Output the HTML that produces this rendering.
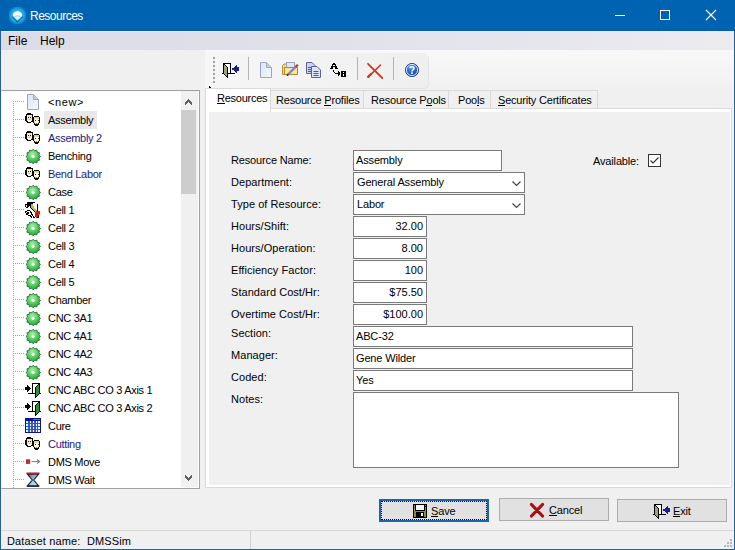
<!DOCTYPE html>
<html><head><meta charset="utf-8">
<style>
*{margin:0;padding:0;box-sizing:border-box}
html,body{width:735px;height:550px;overflow:hidden;background:#f0f0f0;font-family:"Liberation Sans",sans-serif;font-size:11px;color:#000}
.a{position:absolute}
.t{position:absolute;white-space:pre;line-height:13px;letter-spacing:-0.15px}
#title{left:0;top:0;width:735px;height:31px;background:#0063b1}
#menubar{left:1px;top:31px;width:733px;height:19px;background:linear-gradient(90deg,#dcdce7,#e1e1ea 45%,#ebebf0);border-top:1px solid #e2f0fa}
.menu{position:absolute;top:2px;font-size:12px;line-height:15px;white-space:pre}
#tree{left:1px;top:90px;width:199px;height:399px;background:#fff;border:1px solid #a0a0a0;border-left-color:#f4f8fb;overflow:hidden}
.row{position:absolute;left:0;width:178px;height:18px;white-space:nowrap}
.selbox{position:absolute;left:42px;top:0;width:53px;height:18px;background:#e9e9e9}
.lbl{position:absolute;left:46px;top:3px;line-height:13px;letter-spacing:-0.3px}
.blue{color:#1a1a84}
.dh{position:absolute;left:13px;top:8px;width:10px;height:1px;background:repeating-linear-gradient(90deg,#a0a0a0 0 1px,transparent 1px 2px)}
.ico{position:absolute;left:23px;top:1px;width:16px;height:16px}
#vline{left:11px;top:10px;width:1px;height:400px;background:repeating-linear-gradient(#a0a0a0 0 1px,transparent 1px 2px)}
#sb{left:179px;top:0px;width:17px;height:396px;background:#f0f0f0}
#thumb{left:0px;top:19px;width:15px;height:84px;background:#cdcdcd}
.field{position:absolute;background:#fff;border:1px solid #7a7a7a;height:21px;line-height:19px;padding-left:2px;white-space:nowrap;letter-spacing:-0.15px;overflow:hidden}
.combo{padding-left:3px}
.num{text-align:right;padding-right:3px;letter-spacing:0}
.tab{position:absolute;top:90px;height:18px;background:#f0f0f0;border:1px solid #d9d9d9;border-bottom:none}
.btn{position:absolute;width:110px;height:23px;background:#e1e1e1;border:1px solid #adadad}
u{text-decoration:none;position:relative}
u:after{content:"";position:absolute;left:0;right:0;bottom:0px;height:1px;background:#000}
</style></head><body>
<div id="title" class="a">
  <svg class="a" style="left:9px;top:7px" width="17" height="17" viewBox="0 0 17 17">
    <defs><radialGradient id="g1" cx="0.5" cy="0.5" r="0.6"><stop offset="0" stop-color="#b8f4ff"/><stop offset="0.45" stop-color="#2cbcf0"/><stop offset="0.8" stop-color="#128ad4"/><stop offset="1" stop-color="#0063b1" stop-opacity="0"/></radialGradient>
    <linearGradient id="g2" x1="0" y1="0" x2="0" y2="1"><stop offset="0" stop-color="#ffffff"/><stop offset="0.6" stop-color="#f0fcff"/><stop offset="1" stop-color="#a8e4ff"/></linearGradient></defs>
    <rect x="0" y="0" width="17" height="17" rx="4" fill="url(#g1)"/>
    <path d="M3.4 9.6 L8.5 15 L13.6 9.6" stroke="#0a3878" stroke-width="1.2" fill="none" opacity="0.6"/>
    <path d="M3.8 8.8 C3.8 2.6 13.2 2.6 13.2 8.8 L8.5 13.6 Z" fill="url(#g2)"/>
    <path d="M5.5 9.8 C7 8.6 10 8.6 11.5 9.8" stroke="#6cc8f0" stroke-width="0.9" fill="none"/>
  </svg>
  <div class="a" style="left:30px;top:8px;font-size:12px;color:#fff;letter-spacing:-0.5px;line-height:17px;white-space:pre">Resources</div>
  <div class="a" style="left:615px;top:15px;width:10px;height:1px;background:#fff"></div>
  <div class="a" style="left:660px;top:10px;width:10px;height:10px;border:1px solid #fff"></div>
  <svg class="a" style="left:705px;top:9px" width="12" height="12" viewBox="0 0 12 12"><path d="M1 1 L11 11 M11 1 L1 11" stroke="#fff" stroke-width="1.1"/></svg>
</div>
<div class="a" style="left:0;top:30px;width:735px;height:1px;background:#0a5aa6"></div>
<div id="menubar" class="a">
  <div class="menu" style="left:7px">File</div>
  <div class="menu" style="left:39px">Help</div>
</div>
<div class="a" style="left:0;top:31px;width:1px;height:519px;background:#24609c"></div>
<div class="a" style="left:734px;top:31px;width:1px;height:519px;background:#24609c"></div>
<div class="a" style="left:0;top:549px;width:735px;height:1px;background:#24609c"></div>
<div class="a" style="left:1px;top:50px;width:1px;height:499px;background:#e8f6fc"></div>
<div class="a" style="left:733px;top:50px;width:1px;height:499px;background:#eef6fa"></div>
<div class="a" style="left:1px;top:548px;width:733px;height:1px;background:#e8f6fc"></div>

<!-- toolbar -->
<div class="a" style="left:205px;top:50px;width:529px;height:39px;background:linear-gradient(#f8f8f8,#f4f4f4 60%,#f1f1f1)"></div>
<div class="a" style="left:205px;top:53px;width:223px;height:35px;background:linear-gradient(90deg,#f6f6f6,#efefef);border-radius:0 5px 5px 0;box-shadow:1px 1px 0 #e4e4e4"></div>
<div class="a" style="left:213px;top:57px;width:2px;height:26px;background:repeating-linear-gradient(#a0a0a0 0 2px,transparent 2px 4px)"></div>
<svg class="a" style="left:209px;top:86px" width="2" height="2" viewBox="0 0 2 2" shape-rendering="crispEdges"><rect x="0" y="0" width="1" height="2" fill="#000"/><rect x="1" y="1" width="1" height="1" fill="#000"/></svg>

<svg class="a" style="left:222px;top:62px" width="17" height="16" viewBox="0 0 17 16" shape-rendering="crispEdges"><rect x="1" y="1" width="8" height="1" fill="#000"/><rect x="1" y="2" width="2" height="1" fill="#000"/><rect x="3" y="2" width="5" height="1" fill="#fff"/><rect x="8" y="2" width="1" height="1" fill="#000"/><rect x="1" y="3" width="1" height="1" fill="#000"/><rect x="2" y="3" width="1" height="1" fill="#a4a070"/><rect x="3" y="3" width="1" height="1" fill="#000"/><rect x="4" y="3" width="4" height="1" fill="#fff"/><rect x="8" y="3" width="1" height="1" fill="#000"/><rect x="14" y="3" width="1" height="1" fill="#1c1c8a"/><rect x="1" y="4" width="1" height="1" fill="#000"/><rect x="2" y="4" width="2" height="1" fill="#a4a070"/><rect x="4" y="4" width="1" height="1" fill="#000"/><rect x="5" y="4" width="3" height="1" fill="#fff"/><rect x="8" y="4" width="1" height="1" fill="#000"/><rect x="13" y="4" width="2" height="1" fill="#1c1c8a"/><rect x="1" y="5" width="1" height="1" fill="#000"/><rect x="2" y="5" width="3" height="1" fill="#a4a070"/><rect x="5" y="5" width="1" height="1" fill="#000"/><rect x="6" y="5" width="2" height="1" fill="#fff"/><rect x="8" y="5" width="1" height="1" fill="#000"/><rect x="12" y="5" width="5" height="1" fill="#1c1c8a"/><rect x="1" y="6" width="1" height="1" fill="#000"/><rect x="2" y="6" width="3" height="1" fill="#a4a070"/><rect x="5" y="6" width="1" height="1" fill="#000"/><rect x="6" y="6" width="2" height="1" fill="#fff"/><rect x="8" y="6" width="1" height="1" fill="#000"/><rect x="10" y="6" width="7" height="1" fill="#1c1c8a"/><rect x="1" y="7" width="1" height="1" fill="#000"/><rect x="2" y="7" width="3" height="1" fill="#a4a070"/><rect x="5" y="7" width="1" height="1" fill="#000"/><rect x="6" y="7" width="2" height="1" fill="#fff"/><rect x="8" y="7" width="1" height="1" fill="#000"/><rect x="10" y="7" width="7" height="1" fill="#1c1c8a"/><rect x="1" y="8" width="1" height="1" fill="#000"/><rect x="2" y="8" width="3" height="1" fill="#a4a070"/><rect x="5" y="8" width="1" height="1" fill="#000"/><rect x="6" y="8" width="2" height="1" fill="#fff"/><rect x="8" y="8" width="1" height="1" fill="#000"/><rect x="12" y="8" width="5" height="1" fill="#1c1c8a"/><rect x="1" y="9" width="1" height="1" fill="#000"/><rect x="2" y="9" width="3" height="1" fill="#a4a070"/><rect x="5" y="9" width="1" height="1" fill="#000"/><rect x="6" y="9" width="2" height="1" fill="#fff"/><rect x="8" y="9" width="1" height="1" fill="#000"/><rect x="13" y="9" width="2" height="1" fill="#1c1c8a"/><rect x="1" y="10" width="1" height="1" fill="#000"/><rect x="2" y="10" width="3" height="1" fill="#a4a070"/><rect x="5" y="10" width="1" height="1" fill="#000"/><rect x="6" y="10" width="2" height="1" fill="#fff"/><rect x="8" y="10" width="1" height="1" fill="#000"/><rect x="14" y="10" width="1" height="1" fill="#1c1c8a"/><rect x="0" y="11" width="2" height="1" fill="#000"/><rect x="2" y="11" width="3" height="1" fill="#a4a070"/><rect x="5" y="11" width="8" height="1" fill="#000"/><rect x="2" y="12" width="1" height="1" fill="#000"/><rect x="3" y="12" width="2" height="1" fill="#a4a070"/><rect x="5" y="12" width="1" height="1" fill="#000"/><rect x="3" y="13" width="1" height="1" fill="#000"/><rect x="4" y="13" width="1" height="1" fill="#a4a070"/><rect x="5" y="13" width="1" height="1" fill="#000"/><rect x="4" y="14" width="2" height="1" fill="#000"/><rect x="5" y="15" width="1" height="1" fill="#000"/></svg>
<div class="a" style="left:248px;top:57px;width:1px;height:23px;background:#b4b4b4"></div>
<svg class="a" style="left:258px;top:61px" width="16" height="18" viewBox="0 0 16 18"><defs><linearGradient id="gd2" x1="0" y1="0" x2="1" y2="1"><stop offset="0" stop-color="#d6e6fb"/><stop offset="1" stop-color="#f4f8fe"/></linearGradient></defs><path d="M2.5 1.5 H8.5 L13.5 6.5 V16.5 H2.5 Z" fill="url(#gd2)" stroke="#9aa6bf"/><path d="M8.5 1.5 V6.5 H13.5" fill="#c8d0de" stroke="#9aa6bf"/></svg>
<svg class="a" style="left:281px;top:61px" width="18" height="17" viewBox="0 0 18 17"><path d="M1.5 13.5 V4.5 L3 3 H6 V13.5 Z" fill="#f4dc88" stroke="#b8902a"/><rect x="5.5" y="1.5" width="8" height="6" fill="#dde9f6" stroke="#98a4b4"/><path d="M3.5 6.5 H16.5 V13.5 H3.5 Z" fill="#f8e6a0" stroke="#b08628"/><path d="M7.2 13.2 L15 5.6" stroke="#8484c8" stroke-width="2.3"/><path d="M14.6 6 L16.8 3.8" stroke="#c83420" stroke-width="2.3"/><path d="M6 14.6 L7.4 13.2" stroke="#3a3020" stroke-width="1.8"/></svg>
<svg class="a" style="left:305px;top:61px" width="17" height="18" viewBox="0 0 17 18"><path d="M1.5 1.5 H7 L10 4.5 V12.5 H1.5 Z" fill="#c8d4f4" stroke="#5a6090"/><path d="M3 6.5h4M3 8.5h4M3 10.5h4" stroke="#505888"/><path d="M6.5 5.5 H12 L15.5 9 V16.5 H6.5 Z" fill="#dce4f8" stroke="#5a6090"/><path d="M8.5 10.5h5M8.5 12.5h5M8.5 14.5h5" stroke="#505888"/></svg>
<svg class="a" style="left:329px;top:62px" width="18" height="16" viewBox="0 0 18 16" shape-rendering="crispEdges"><rect x="4" y="1" width="2" height="1" fill="#000"/><rect x="3" y="2" width="4" height="1" fill="#000"/><rect x="3" y="3" width="1" height="1" fill="#000"/><rect x="6" y="3" width="1" height="1" fill="#000"/><rect x="2" y="4" width="6" height="1" fill="#000"/><rect x="2" y="5" width="2" height="1" fill="#000"/><rect x="6" y="5" width="2" height="1" fill="#000"/><rect x="1" y="6" width="3" height="1" fill="#000"/><rect x="6" y="6" width="3" height="1" fill="#000"/><rect x="4" y="8" width="1" height="1" fill="#000"/><rect x="4" y="9" width="1" height="1" fill="#000"/><rect x="9" y="9" width="1" height="1" fill="#000"/><rect x="12" y="9" width="5" height="1" fill="#000"/><rect x="5" y="10" width="1" height="1" fill="#000"/><rect x="9" y="10" width="2" height="1" fill="#000"/><rect x="12" y="10" width="2" height="1" fill="#000"/><rect x="14" y="10" width="1" height="1" fill="#fff"/><rect x="15" y="10" width="2" height="1" fill="#000"/><rect x="6" y="11" width="5" height="1" fill="#000"/><rect x="12" y="11" width="5" height="1" fill="#000"/><rect x="9" y="12" width="2" height="1" fill="#000"/><rect x="12" y="12" width="2" height="1" fill="#000"/><rect x="14" y="12" width="1" height="1" fill="#fff"/><rect x="15" y="12" width="2" height="1" fill="#000"/><rect x="9" y="13" width="1" height="1" fill="#000"/><rect x="12" y="13" width="2" height="1" fill="#000"/><rect x="14" y="13" width="1" height="1" fill="#fff"/><rect x="15" y="13" width="2" height="1" fill="#000"/><rect x="12" y="14" width="5" height="1" fill="#000"/></svg>
<div class="a" style="left:357px;top:57px;width:1px;height:23px;background:#b4b4b4"></div>
<svg class="a" style="left:366px;top:62px" width="18" height="17" viewBox="0 0 18 17"><path d="M2 1.8 L16.3 16" stroke="#d03a1c" stroke-width="1.8" stroke-linecap="round"/><path d="M14.5 3 L2.6 14.6" stroke="#d03a1c" stroke-width="1.6" stroke-linecap="round"/><path d="M2.2 14.8 L5 12" stroke="#d03a1c" stroke-width="2.4" stroke-linecap="round"/></svg>
<div class="a" style="left:393px;top:57px;width:1px;height:23px;background:#b4b4b4"></div>
<svg class="a" style="left:404px;top:62px" width="16" height="16" viewBox="0 0 16 16"><defs><radialGradient id="gh" cx="0.4" cy="0.3" r="0.75"><stop offset="0" stop-color="#4a90f0"/><stop offset="1" stop-color="#0a3aa0"/></radialGradient></defs><circle cx="8" cy="8" r="6.6" fill="url(#gh)" stroke="#28407a" stroke-width="0.9"/><circle cx="8" cy="8" r="5.6" fill="none" stroke="#f0f6ff" stroke-width="0.9"/><path d="M6 6.2 C6 4.2 10 4.2 10 6.2 C10 7.6 8 7.6 8 9.4" stroke="#fff" stroke-width="1.6" fill="none"/><rect x="7.2" y="10.3" width="1.7" height="1.7" fill="#fff"/></svg>


<!-- tree -->
<div id="tree" class="a">
  <div id="vline" class="a"></div>
<div class="row" style="top:2px"><div class="dh"></div><svg class="ico" width="16" height="16" viewBox="0 0 16 16"><defs><linearGradient id="gd" x1="0" y1="0" x2="1" y2="1"><stop offset="0" stop-color="#d6e6fb"/><stop offset="1" stop-color="#f4f8fe"/></linearGradient></defs><path d="M2.5 0.5 H8.5 L13.5 5.5 V15.5 H2.5 Z" fill="url(#gd)" stroke="#9aa6bf"/><path d="M8.5 0.5 V5.5 H13.5" fill="#c8d0de" stroke="#9aa6bf"/></svg><div class="lbl"><span style="letter-spacing:0.6px">&lt;new&gt;</span></div></div>
<div class="row" style="top:20px"><div class="selbox"></div><div class="dh"></div><svg class="ico" width="16" height="16" viewBox="0 0 16 16" shape-rendering="crispEdges"><rect x="2" y="1" width="4" height="1" fill="#0a0806"/><rect x="1" y="2" width="7" height="1" fill="#0a0806"/><rect x="1" y="3" width="1" height="1" fill="#0a0806"/><rect x="2" y="3" width="5" height="1" fill="#f0e8cc"/><rect x="7" y="3" width="1" height="1" fill="#0a0806"/><rect x="0" y="4" width="2" height="1" fill="#0a0806"/><rect x="2" y="4" width="5" height="1" fill="#f0e8cc"/><rect x="7" y="4" width="1" height="1" fill="#0a0806"/><rect x="9" y="4" width="5" height="1" fill="#0a0806"/><rect x="0" y="5" width="2" height="1" fill="#0a0806"/><rect x="2" y="5" width="1" height="1" fill="#f0e8cc"/><rect x="3" y="5" width="1" height="1" fill="#302818"/><rect x="4" y="5" width="1" height="1" fill="#f0e8cc"/><rect x="5" y="5" width="1" height="1" fill="#302818"/><rect x="6" y="5" width="1" height="1" fill="#f0e8cc"/><rect x="7" y="5" width="2" height="1" fill="#0a0806"/><rect x="9" y="5" width="5" height="1" fill="#dcd89a"/><rect x="14" y="5" width="1" height="1" fill="#0a0806"/><rect x="0" y="6" width="2" height="1" fill="#0a0806"/><rect x="2" y="6" width="5" height="1" fill="#f0e8cc"/><rect x="7" y="6" width="2" height="1" fill="#0a0806"/><rect x="9" y="6" width="5" height="1" fill="#dcd89a"/><rect x="14" y="6" width="1" height="1" fill="#0a0806"/><rect x="0" y="7" width="2" height="1" fill="#0a0806"/><rect x="2" y="7" width="2" height="1" fill="#f0e8cc"/><rect x="4" y="7" width="1" height="1" fill="#b0a878"/><rect x="5" y="7" width="2" height="1" fill="#f0e8cc"/><rect x="7" y="7" width="2" height="1" fill="#0a0806"/><rect x="9" y="7" width="5" height="1" fill="#fbf9ee"/><rect x="14" y="7" width="1" height="1" fill="#0a0806"/><rect x="0" y="8" width="2" height="1" fill="#0a0806"/><rect x="2" y="8" width="1" height="1" fill="#f0e8cc"/><rect x="3" y="8" width="3" height="1" fill="#fbf9ee"/><rect x="6" y="8" width="1" height="1" fill="#f0e8cc"/><rect x="7" y="8" width="2" height="1" fill="#0a0806"/><rect x="9" y="8" width="1" height="1" fill="#fbf9ee"/><rect x="10" y="8" width="1" height="1" fill="#302818"/><rect x="11" y="8" width="2" height="1" fill="#fbf9ee"/><rect x="13" y="8" width="1" height="1" fill="#302818"/><rect x="14" y="8" width="1" height="1" fill="#0a0806"/><rect x="1" y="9" width="2" height="1" fill="#0a0806"/><rect x="3" y="9" width="3" height="1" fill="#fbf9ee"/><rect x="6" y="9" width="3" height="1" fill="#0a0806"/><rect x="9" y="9" width="5" height="1" fill="#fbf9ee"/><rect x="14" y="9" width="1" height="1" fill="#0a0806"/><rect x="2" y="10" width="4" height="1" fill="#0a0806"/><rect x="8" y="10" width="1" height="1" fill="#0a0806"/><rect x="9" y="10" width="1" height="1" fill="#dcd89a"/><rect x="10" y="10" width="3" height="1" fill="#fbf9ee"/><rect x="13" y="10" width="1" height="1" fill="#dcd89a"/><rect x="14" y="10" width="1" height="1" fill="#0a0806"/><rect x="9" y="11" width="1" height="1" fill="#0a0806"/><rect x="10" y="11" width="1" height="1" fill="#dcd89a"/><rect x="11" y="11" width="1" height="1" fill="#b0a878"/><rect x="12" y="11" width="1" height="1" fill="#dcd89a"/><rect x="13" y="11" width="1" height="1" fill="#0a0806"/><rect x="9" y="12" width="5" height="1" fill="#0a0806"/><rect x="10" y="13" width="3" height="1" fill="#0a0806"/></svg><div class="lbl">Assembly</div></div>
<div class="row" style="top:38px"><div class="dh"></div><svg class="ico" width="16" height="16" viewBox="0 0 16 16" shape-rendering="crispEdges"><rect x="2" y="1" width="4" height="1" fill="#0a0806"/><rect x="1" y="2" width="7" height="1" fill="#0a0806"/><rect x="1" y="3" width="1" height="1" fill="#0a0806"/><rect x="2" y="3" width="5" height="1" fill="#f0e8cc"/><rect x="7" y="3" width="1" height="1" fill="#0a0806"/><rect x="0" y="4" width="2" height="1" fill="#0a0806"/><rect x="2" y="4" width="5" height="1" fill="#f0e8cc"/><rect x="7" y="4" width="1" height="1" fill="#0a0806"/><rect x="9" y="4" width="5" height="1" fill="#0a0806"/><rect x="0" y="5" width="2" height="1" fill="#0a0806"/><rect x="2" y="5" width="1" height="1" fill="#f0e8cc"/><rect x="3" y="5" width="1" height="1" fill="#302818"/><rect x="4" y="5" width="1" height="1" fill="#f0e8cc"/><rect x="5" y="5" width="1" height="1" fill="#302818"/><rect x="6" y="5" width="1" height="1" fill="#f0e8cc"/><rect x="7" y="5" width="2" height="1" fill="#0a0806"/><rect x="9" y="5" width="5" height="1" fill="#dcd89a"/><rect x="14" y="5" width="1" height="1" fill="#0a0806"/><rect x="0" y="6" width="2" height="1" fill="#0a0806"/><rect x="2" y="6" width="5" height="1" fill="#f0e8cc"/><rect x="7" y="6" width="2" height="1" fill="#0a0806"/><rect x="9" y="6" width="5" height="1" fill="#dcd89a"/><rect x="14" y="6" width="1" height="1" fill="#0a0806"/><rect x="0" y="7" width="2" height="1" fill="#0a0806"/><rect x="2" y="7" width="2" height="1" fill="#f0e8cc"/><rect x="4" y="7" width="1" height="1" fill="#b0a878"/><rect x="5" y="7" width="2" height="1" fill="#f0e8cc"/><rect x="7" y="7" width="2" height="1" fill="#0a0806"/><rect x="9" y="7" width="5" height="1" fill="#fbf9ee"/><rect x="14" y="7" width="1" height="1" fill="#0a0806"/><rect x="0" y="8" width="2" height="1" fill="#0a0806"/><rect x="2" y="8" width="1" height="1" fill="#f0e8cc"/><rect x="3" y="8" width="3" height="1" fill="#fbf9ee"/><rect x="6" y="8" width="1" height="1" fill="#f0e8cc"/><rect x="7" y="8" width="2" height="1" fill="#0a0806"/><rect x="9" y="8" width="1" height="1" fill="#fbf9ee"/><rect x="10" y="8" width="1" height="1" fill="#302818"/><rect x="11" y="8" width="2" height="1" fill="#fbf9ee"/><rect x="13" y="8" width="1" height="1" fill="#302818"/><rect x="14" y="8" width="1" height="1" fill="#0a0806"/><rect x="1" y="9" width="2" height="1" fill="#0a0806"/><rect x="3" y="9" width="3" height="1" fill="#fbf9ee"/><rect x="6" y="9" width="3" height="1" fill="#0a0806"/><rect x="9" y="9" width="5" height="1" fill="#fbf9ee"/><rect x="14" y="9" width="1" height="1" fill="#0a0806"/><rect x="2" y="10" width="4" height="1" fill="#0a0806"/><rect x="8" y="10" width="1" height="1" fill="#0a0806"/><rect x="9" y="10" width="1" height="1" fill="#dcd89a"/><rect x="10" y="10" width="3" height="1" fill="#fbf9ee"/><rect x="13" y="10" width="1" height="1" fill="#dcd89a"/><rect x="14" y="10" width="1" height="1" fill="#0a0806"/><rect x="9" y="11" width="1" height="1" fill="#0a0806"/><rect x="10" y="11" width="1" height="1" fill="#dcd89a"/><rect x="11" y="11" width="1" height="1" fill="#b0a878"/><rect x="12" y="11" width="1" height="1" fill="#dcd89a"/><rect x="13" y="11" width="1" height="1" fill="#0a0806"/><rect x="9" y="12" width="5" height="1" fill="#0a0806"/><rect x="10" y="13" width="3" height="1" fill="#0a0806"/></svg><div class="lbl blue">Assembly 2</div></div>
<div class="row" style="top:56px"><div class="dh"></div><svg class="ico" width="16" height="16" viewBox="0 0 16 16"><defs><radialGradient id="gg" cx="0.45" cy="0.35" r="0.7"><stop offset="0" stop-color="#a8f0a8"/><stop offset="0.55" stop-color="#50c85a"/><stop offset="1" stop-color="#1e9a30"/></radialGradient></defs><path d="M8.20 1.20 L9.73 2.80 L11.85 2.18 L12.37 4.33 L14.52 4.85 L13.90 6.97 L15.50 8.50 L13.90 10.03 L14.52 12.15 L12.37 12.67 L11.85 14.82 L9.73 14.20 L8.20 15.80 L6.67 14.20 L4.55 14.82 L4.03 12.67 L1.88 12.15 L2.50 10.03 L0.90 8.50 L2.50 6.97 L1.88 4.85 L4.03 4.33 L4.55 2.18 L6.67 2.80 Z" fill="url(#gg)" stroke="#16662a" stroke-width="0.8"/><circle cx="8" cy="8.3" r="1.6" fill="#fff"/></svg><div class="lbl">Benching</div></div>
<div class="row" style="top:74px"><div class="dh"></div><svg class="ico" width="16" height="16" viewBox="0 0 16 16" shape-rendering="crispEdges"><rect x="2" y="1" width="4" height="1" fill="#0a0806"/><rect x="1" y="2" width="7" height="1" fill="#0a0806"/><rect x="1" y="3" width="1" height="1" fill="#0a0806"/><rect x="2" y="3" width="5" height="1" fill="#f0e8cc"/><rect x="7" y="3" width="1" height="1" fill="#0a0806"/><rect x="0" y="4" width="2" height="1" fill="#0a0806"/><rect x="2" y="4" width="5" height="1" fill="#f0e8cc"/><rect x="7" y="4" width="1" height="1" fill="#0a0806"/><rect x="9" y="4" width="5" height="1" fill="#0a0806"/><rect x="0" y="5" width="2" height="1" fill="#0a0806"/><rect x="2" y="5" width="1" height="1" fill="#f0e8cc"/><rect x="3" y="5" width="1" height="1" fill="#302818"/><rect x="4" y="5" width="1" height="1" fill="#f0e8cc"/><rect x="5" y="5" width="1" height="1" fill="#302818"/><rect x="6" y="5" width="1" height="1" fill="#f0e8cc"/><rect x="7" y="5" width="2" height="1" fill="#0a0806"/><rect x="9" y="5" width="5" height="1" fill="#dcd89a"/><rect x="14" y="5" width="1" height="1" fill="#0a0806"/><rect x="0" y="6" width="2" height="1" fill="#0a0806"/><rect x="2" y="6" width="5" height="1" fill="#f0e8cc"/><rect x="7" y="6" width="2" height="1" fill="#0a0806"/><rect x="9" y="6" width="5" height="1" fill="#dcd89a"/><rect x="14" y="6" width="1" height="1" fill="#0a0806"/><rect x="0" y="7" width="2" height="1" fill="#0a0806"/><rect x="2" y="7" width="2" height="1" fill="#f0e8cc"/><rect x="4" y="7" width="1" height="1" fill="#b0a878"/><rect x="5" y="7" width="2" height="1" fill="#f0e8cc"/><rect x="7" y="7" width="2" height="1" fill="#0a0806"/><rect x="9" y="7" width="5" height="1" fill="#fbf9ee"/><rect x="14" y="7" width="1" height="1" fill="#0a0806"/><rect x="0" y="8" width="2" height="1" fill="#0a0806"/><rect x="2" y="8" width="1" height="1" fill="#f0e8cc"/><rect x="3" y="8" width="3" height="1" fill="#fbf9ee"/><rect x="6" y="8" width="1" height="1" fill="#f0e8cc"/><rect x="7" y="8" width="2" height="1" fill="#0a0806"/><rect x="9" y="8" width="1" height="1" fill="#fbf9ee"/><rect x="10" y="8" width="1" height="1" fill="#302818"/><rect x="11" y="8" width="2" height="1" fill="#fbf9ee"/><rect x="13" y="8" width="1" height="1" fill="#302818"/><rect x="14" y="8" width="1" height="1" fill="#0a0806"/><rect x="1" y="9" width="2" height="1" fill="#0a0806"/><rect x="3" y="9" width="3" height="1" fill="#fbf9ee"/><rect x="6" y="9" width="3" height="1" fill="#0a0806"/><rect x="9" y="9" width="5" height="1" fill="#fbf9ee"/><rect x="14" y="9" width="1" height="1" fill="#0a0806"/><rect x="2" y="10" width="4" height="1" fill="#0a0806"/><rect x="8" y="10" width="1" height="1" fill="#0a0806"/><rect x="9" y="10" width="1" height="1" fill="#dcd89a"/><rect x="10" y="10" width="3" height="1" fill="#fbf9ee"/><rect x="13" y="10" width="1" height="1" fill="#dcd89a"/><rect x="14" y="10" width="1" height="1" fill="#0a0806"/><rect x="9" y="11" width="1" height="1" fill="#0a0806"/><rect x="10" y="11" width="1" height="1" fill="#dcd89a"/><rect x="11" y="11" width="1" height="1" fill="#b0a878"/><rect x="12" y="11" width="1" height="1" fill="#dcd89a"/><rect x="13" y="11" width="1" height="1" fill="#0a0806"/><rect x="9" y="12" width="5" height="1" fill="#0a0806"/><rect x="10" y="13" width="3" height="1" fill="#0a0806"/></svg><div class="lbl blue">Bend Labor</div></div>
<div class="row" style="top:92px"><div class="dh"></div><svg class="ico" width="16" height="16" viewBox="0 0 16 16"><defs><radialGradient id="gg" cx="0.45" cy="0.35" r="0.7"><stop offset="0" stop-color="#a8f0a8"/><stop offset="0.55" stop-color="#50c85a"/><stop offset="1" stop-color="#1e9a30"/></radialGradient></defs><path d="M8.20 1.20 L9.73 2.80 L11.85 2.18 L12.37 4.33 L14.52 4.85 L13.90 6.97 L15.50 8.50 L13.90 10.03 L14.52 12.15 L12.37 12.67 L11.85 14.82 L9.73 14.20 L8.20 15.80 L6.67 14.20 L4.55 14.82 L4.03 12.67 L1.88 12.15 L2.50 10.03 L0.90 8.50 L2.50 6.97 L1.88 4.85 L4.03 4.33 L4.55 2.18 L6.67 2.80 Z" fill="url(#gg)" stroke="#16662a" stroke-width="0.8"/><circle cx="8" cy="8.3" r="1.6" fill="#fff"/></svg><div class="lbl">Case</div></div>
<div class="row" style="top:110px"><div class="dh"></div><svg class="ico" width="17" height="17" viewBox="0 0 17 17" shape-rendering="crispEdges" style="left:22px;top:0px;width:17px;height:17px"><rect x="3" y="1" width="8" height="1" fill="#000"/><rect x="3" y="2" width="6" height="1" fill="#000"/><rect x="1" y="3" width="6" height="1" fill="#000"/><rect x="7" y="3" width="2" height="1" fill="#b8b868"/><rect x="13" y="3" width="1" height="1" fill="#000"/><rect x="1" y="4" width="1" height="1" fill="#000"/><rect x="3" y="4" width="4" height="1" fill="#000"/><rect x="7" y="4" width="2" height="1" fill="#b8b868"/><rect x="13" y="4" width="1" height="1" fill="#000"/><rect x="1" y="5" width="1" height="1" fill="#000"/><rect x="2" y="5" width="1" height="1" fill="#fff"/><rect x="3" y="5" width="2" height="1" fill="#000"/><rect x="6" y="5" width="1" height="1" fill="#000"/><rect x="7" y="5" width="3" height="1" fill="#b8b868"/><rect x="13" y="5" width="1" height="1" fill="#000"/><rect x="2" y="6" width="2" height="1" fill="#000"/><rect x="6" y="6" width="1" height="1" fill="#000"/><rect x="7" y="6" width="3" height="1" fill="#b8b868"/><rect x="13" y="6" width="1" height="1" fill="#000"/><rect x="7" y="7" width="1" height="1" fill="#000"/><rect x="8" y="7" width="3" height="1" fill="#b8b868"/><rect x="13" y="7" width="1" height="1" fill="#000"/><rect x="8" y="8" width="1" height="1" fill="#000"/><rect x="9" y="8" width="3" height="1" fill="#b8b868"/><rect x="13" y="8" width="1" height="1" fill="#000"/><rect x="3" y="9" width="3" height="1" fill="#000"/><rect x="9" y="9" width="1" height="1" fill="#000"/><rect x="10" y="9" width="3" height="1" fill="#b8b868"/><rect x="13" y="9" width="1" height="1" fill="#000"/><rect x="1" y="10" width="2" height="1" fill="#000"/><rect x="6" y="10" width="1" height="1" fill="#000"/><rect x="10" y="10" width="1" height="1" fill="#000"/><rect x="11" y="10" width="1" height="1" fill="#b8b868"/><rect x="12" y="10" width="4" height="1" fill="#e01808"/><rect x="1" y="11" width="1" height="1" fill="#000"/><rect x="3" y="11" width="2" height="1" fill="#000"/><rect x="6" y="11" width="2" height="1" fill="#000"/><rect x="11" y="11" width="5" height="1" fill="#e01808"/><rect x="2" y="12" width="3" height="1" fill="#000"/><rect x="7" y="12" width="1" height="1" fill="#000"/><rect x="11" y="12" width="5" height="1" fill="#e01808"/><rect x="2" y="13" width="2" height="1" fill="#000"/><rect x="7" y="13" width="2" height="1" fill="#000"/><rect x="11" y="13" width="4" height="1" fill="#e01808"/><rect x="15" y="13" width="1" height="1" fill="#b8b868"/><rect x="4" y="14" width="3" height="1" fill="#000"/><rect x="8" y="14" width="1" height="1" fill="#000"/><rect x="11" y="14" width="3" height="1" fill="#e01808"/><rect x="14" y="14" width="1" height="1" fill="#000"/><rect x="6" y="15" width="2" height="1" fill="#000"/><rect x="9" y="15" width="1" height="1" fill="#000"/><rect x="11" y="15" width="3" height="1" fill="#e01808"/><rect x="14" y="15" width="1" height="1" fill="#000"/><rect x="7" y="16" width="1" height="1" fill="#000"/><rect x="9" y="16" width="2" height="1" fill="#000"/><rect x="12" y="16" width="1" height="1" fill="#e01808"/><rect x="13" y="16" width="2" height="1" fill="#000"/></svg><div class="lbl">Cell 1</div></div>
<div class="row" style="top:128px"><div class="dh"></div><svg class="ico" width="16" height="16" viewBox="0 0 16 16"><defs><radialGradient id="gg" cx="0.45" cy="0.35" r="0.7"><stop offset="0" stop-color="#a8f0a8"/><stop offset="0.55" stop-color="#50c85a"/><stop offset="1" stop-color="#1e9a30"/></radialGradient></defs><path d="M8.20 1.20 L9.73 2.80 L11.85 2.18 L12.37 4.33 L14.52 4.85 L13.90 6.97 L15.50 8.50 L13.90 10.03 L14.52 12.15 L12.37 12.67 L11.85 14.82 L9.73 14.20 L8.20 15.80 L6.67 14.20 L4.55 14.82 L4.03 12.67 L1.88 12.15 L2.50 10.03 L0.90 8.50 L2.50 6.97 L1.88 4.85 L4.03 4.33 L4.55 2.18 L6.67 2.80 Z" fill="url(#gg)" stroke="#16662a" stroke-width="0.8"/><circle cx="8" cy="8.3" r="1.6" fill="#fff"/></svg><div class="lbl">Cell 2</div></div>
<div class="row" style="top:146px"><div class="dh"></div><svg class="ico" width="16" height="16" viewBox="0 0 16 16"><defs><radialGradient id="gg" cx="0.45" cy="0.35" r="0.7"><stop offset="0" stop-color="#a8f0a8"/><stop offset="0.55" stop-color="#50c85a"/><stop offset="1" stop-color="#1e9a30"/></radialGradient></defs><path d="M8.20 1.20 L9.73 2.80 L11.85 2.18 L12.37 4.33 L14.52 4.85 L13.90 6.97 L15.50 8.50 L13.90 10.03 L14.52 12.15 L12.37 12.67 L11.85 14.82 L9.73 14.20 L8.20 15.80 L6.67 14.20 L4.55 14.82 L4.03 12.67 L1.88 12.15 L2.50 10.03 L0.90 8.50 L2.50 6.97 L1.88 4.85 L4.03 4.33 L4.55 2.18 L6.67 2.80 Z" fill="url(#gg)" stroke="#16662a" stroke-width="0.8"/><circle cx="8" cy="8.3" r="1.6" fill="#fff"/></svg><div class="lbl">Cell 3</div></div>
<div class="row" style="top:164px"><div class="dh"></div><svg class="ico" width="16" height="16" viewBox="0 0 16 16"><defs><radialGradient id="gg" cx="0.45" cy="0.35" r="0.7"><stop offset="0" stop-color="#a8f0a8"/><stop offset="0.55" stop-color="#50c85a"/><stop offset="1" stop-color="#1e9a30"/></radialGradient></defs><path d="M8.20 1.20 L9.73 2.80 L11.85 2.18 L12.37 4.33 L14.52 4.85 L13.90 6.97 L15.50 8.50 L13.90 10.03 L14.52 12.15 L12.37 12.67 L11.85 14.82 L9.73 14.20 L8.20 15.80 L6.67 14.20 L4.55 14.82 L4.03 12.67 L1.88 12.15 L2.50 10.03 L0.90 8.50 L2.50 6.97 L1.88 4.85 L4.03 4.33 L4.55 2.18 L6.67 2.80 Z" fill="url(#gg)" stroke="#16662a" stroke-width="0.8"/><circle cx="8" cy="8.3" r="1.6" fill="#fff"/></svg><div class="lbl">Cell 4</div></div>
<div class="row" style="top:182px"><div class="dh"></div><svg class="ico" width="16" height="16" viewBox="0 0 16 16"><defs><radialGradient id="gg" cx="0.45" cy="0.35" r="0.7"><stop offset="0" stop-color="#a8f0a8"/><stop offset="0.55" stop-color="#50c85a"/><stop offset="1" stop-color="#1e9a30"/></radialGradient></defs><path d="M8.20 1.20 L9.73 2.80 L11.85 2.18 L12.37 4.33 L14.52 4.85 L13.90 6.97 L15.50 8.50 L13.90 10.03 L14.52 12.15 L12.37 12.67 L11.85 14.82 L9.73 14.20 L8.20 15.80 L6.67 14.20 L4.55 14.82 L4.03 12.67 L1.88 12.15 L2.50 10.03 L0.90 8.50 L2.50 6.97 L1.88 4.85 L4.03 4.33 L4.55 2.18 L6.67 2.80 Z" fill="url(#gg)" stroke="#16662a" stroke-width="0.8"/><circle cx="8" cy="8.3" r="1.6" fill="#fff"/></svg><div class="lbl">Cell 5</div></div>
<div class="row" style="top:200px"><div class="dh"></div><svg class="ico" width="16" height="16" viewBox="0 0 16 16"><defs><radialGradient id="gg" cx="0.45" cy="0.35" r="0.7"><stop offset="0" stop-color="#a8f0a8"/><stop offset="0.55" stop-color="#50c85a"/><stop offset="1" stop-color="#1e9a30"/></radialGradient></defs><path d="M8.20 1.20 L9.73 2.80 L11.85 2.18 L12.37 4.33 L14.52 4.85 L13.90 6.97 L15.50 8.50 L13.90 10.03 L14.52 12.15 L12.37 12.67 L11.85 14.82 L9.73 14.20 L8.20 15.80 L6.67 14.20 L4.55 14.82 L4.03 12.67 L1.88 12.15 L2.50 10.03 L0.90 8.50 L2.50 6.97 L1.88 4.85 L4.03 4.33 L4.55 2.18 L6.67 2.80 Z" fill="url(#gg)" stroke="#16662a" stroke-width="0.8"/><circle cx="8" cy="8.3" r="1.6" fill="#fff"/></svg><div class="lbl">Chamber</div></div>
<div class="row" style="top:218px"><div class="dh"></div><svg class="ico" width="16" height="16" viewBox="0 0 16 16"><defs><radialGradient id="gg" cx="0.45" cy="0.35" r="0.7"><stop offset="0" stop-color="#a8f0a8"/><stop offset="0.55" stop-color="#50c85a"/><stop offset="1" stop-color="#1e9a30"/></radialGradient></defs><path d="M8.20 1.20 L9.73 2.80 L11.85 2.18 L12.37 4.33 L14.52 4.85 L13.90 6.97 L15.50 8.50 L13.90 10.03 L14.52 12.15 L12.37 12.67 L11.85 14.82 L9.73 14.20 L8.20 15.80 L6.67 14.20 L4.55 14.82 L4.03 12.67 L1.88 12.15 L2.50 10.03 L0.90 8.50 L2.50 6.97 L1.88 4.85 L4.03 4.33 L4.55 2.18 L6.67 2.80 Z" fill="url(#gg)" stroke="#16662a" stroke-width="0.8"/><circle cx="8" cy="8.3" r="1.6" fill="#fff"/></svg><div class="lbl">CNC 3A1</div></div>
<div class="row" style="top:236px"><div class="dh"></div><svg class="ico" width="16" height="16" viewBox="0 0 16 16"><defs><radialGradient id="gg" cx="0.45" cy="0.35" r="0.7"><stop offset="0" stop-color="#a8f0a8"/><stop offset="0.55" stop-color="#50c85a"/><stop offset="1" stop-color="#1e9a30"/></radialGradient></defs><path d="M8.20 1.20 L9.73 2.80 L11.85 2.18 L12.37 4.33 L14.52 4.85 L13.90 6.97 L15.50 8.50 L13.90 10.03 L14.52 12.15 L12.37 12.67 L11.85 14.82 L9.73 14.20 L8.20 15.80 L6.67 14.20 L4.55 14.82 L4.03 12.67 L1.88 12.15 L2.50 10.03 L0.90 8.50 L2.50 6.97 L1.88 4.85 L4.03 4.33 L4.55 2.18 L6.67 2.80 Z" fill="url(#gg)" stroke="#16662a" stroke-width="0.8"/><circle cx="8" cy="8.3" r="1.6" fill="#fff"/></svg><div class="lbl">CNC 4A1</div></div>
<div class="row" style="top:254px"><div class="dh"></div><svg class="ico" width="16" height="16" viewBox="0 0 16 16"><defs><radialGradient id="gg" cx="0.45" cy="0.35" r="0.7"><stop offset="0" stop-color="#a8f0a8"/><stop offset="0.55" stop-color="#50c85a"/><stop offset="1" stop-color="#1e9a30"/></radialGradient></defs><path d="M8.20 1.20 L9.73 2.80 L11.85 2.18 L12.37 4.33 L14.52 4.85 L13.90 6.97 L15.50 8.50 L13.90 10.03 L14.52 12.15 L12.37 12.67 L11.85 14.82 L9.73 14.20 L8.20 15.80 L6.67 14.20 L4.55 14.82 L4.03 12.67 L1.88 12.15 L2.50 10.03 L0.90 8.50 L2.50 6.97 L1.88 4.85 L4.03 4.33 L4.55 2.18 L6.67 2.80 Z" fill="url(#gg)" stroke="#16662a" stroke-width="0.8"/><circle cx="8" cy="8.3" r="1.6" fill="#fff"/></svg><div class="lbl">CNC 4A2</div></div>
<div class="row" style="top:272px"><div class="dh"></div><svg class="ico" width="16" height="16" viewBox="0 0 16 16"><defs><radialGradient id="gg" cx="0.45" cy="0.35" r="0.7"><stop offset="0" stop-color="#a8f0a8"/><stop offset="0.55" stop-color="#50c85a"/><stop offset="1" stop-color="#1e9a30"/></radialGradient></defs><path d="M8.20 1.20 L9.73 2.80 L11.85 2.18 L12.37 4.33 L14.52 4.85 L13.90 6.97 L15.50 8.50 L13.90 10.03 L14.52 12.15 L12.37 12.67 L11.85 14.82 L9.73 14.20 L8.20 15.80 L6.67 14.20 L4.55 14.82 L4.03 12.67 L1.88 12.15 L2.50 10.03 L0.90 8.50 L2.50 6.97 L1.88 4.85 L4.03 4.33 L4.55 2.18 L6.67 2.80 Z" fill="url(#gg)" stroke="#16662a" stroke-width="0.8"/><circle cx="8" cy="8.3" r="1.6" fill="#fff"/></svg><div class="lbl">CNC 4A3</div></div>
<div class="row" style="top:290px"><div class="dh"></div><svg class="ico" width="17" height="16" viewBox="0 0 17 16" shape-rendering="crispEdges" style="left:22px;top:1px;width:17px;height:16px"><rect x="8" y="1" width="8" height="1" fill="#000"/><rect x="8" y="2" width="1" height="1" fill="#000"/><rect x="9" y="2" width="5" height="1" fill="#fff"/><rect x="14" y="2" width="2" height="1" fill="#000"/><rect x="3" y="3" width="1" height="1" fill="#000"/><rect x="8" y="3" width="1" height="1" fill="#000"/><rect x="9" y="3" width="4" height="1" fill="#fff"/><rect x="13" y="3" width="1" height="1" fill="#000"/><rect x="14" y="3" width="1" height="1" fill="#1e9a2a"/><rect x="15" y="3" width="1" height="1" fill="#000"/><rect x="3" y="4" width="2" height="1" fill="#000"/><rect x="8" y="4" width="1" height="1" fill="#000"/><rect x="9" y="4" width="3" height="1" fill="#fff"/><rect x="12" y="4" width="1" height="1" fill="#000"/><rect x="13" y="4" width="2" height="1" fill="#1e9a2a"/><rect x="15" y="4" width="1" height="1" fill="#000"/><rect x="1" y="5" width="5" height="1" fill="#000"/><rect x="8" y="5" width="1" height="1" fill="#000"/><rect x="9" y="5" width="2" height="1" fill="#fff"/><rect x="11" y="5" width="1" height="1" fill="#000"/><rect x="12" y="5" width="3" height="1" fill="#1e9a2a"/><rect x="15" y="5" width="1" height="1" fill="#000"/><rect x="1" y="6" width="6" height="1" fill="#000"/><rect x="8" y="6" width="1" height="1" fill="#000"/><rect x="9" y="6" width="2" height="1" fill="#fff"/><rect x="11" y="6" width="1" height="1" fill="#000"/><rect x="12" y="6" width="3" height="1" fill="#1e9a2a"/><rect x="15" y="6" width="1" height="1" fill="#000"/><rect x="1" y="7" width="5" height="1" fill="#000"/><rect x="8" y="7" width="1" height="1" fill="#000"/><rect x="9" y="7" width="2" height="1" fill="#fff"/><rect x="11" y="7" width="1" height="1" fill="#000"/><rect x="12" y="7" width="3" height="1" fill="#1e9a2a"/><rect x="15" y="7" width="1" height="1" fill="#000"/><rect x="3" y="8" width="2" height="1" fill="#000"/><rect x="8" y="8" width="1" height="1" fill="#000"/><rect x="9" y="8" width="2" height="1" fill="#fff"/><rect x="11" y="8" width="1" height="1" fill="#000"/><rect x="12" y="8" width="3" height="1" fill="#1e9a2a"/><rect x="15" y="8" width="1" height="1" fill="#000"/><rect x="3" y="9" width="1" height="1" fill="#000"/><rect x="8" y="9" width="1" height="1" fill="#000"/><rect x="9" y="9" width="2" height="1" fill="#fff"/><rect x="11" y="9" width="1" height="1" fill="#000"/><rect x="12" y="9" width="3" height="1" fill="#1e9a2a"/><rect x="15" y="9" width="1" height="1" fill="#000"/><rect x="8" y="10" width="1" height="1" fill="#000"/><rect x="9" y="10" width="2" height="1" fill="#fff"/><rect x="11" y="10" width="1" height="1" fill="#000"/><rect x="12" y="10" width="3" height="1" fill="#1e9a2a"/><rect x="15" y="10" width="1" height="1" fill="#000"/><rect x="4" y="11" width="8" height="1" fill="#000"/><rect x="12" y="11" width="3" height="1" fill="#1e9a2a"/><rect x="15" y="11" width="2" height="1" fill="#000"/><rect x="11" y="12" width="1" height="1" fill="#000"/><rect x="12" y="12" width="2" height="1" fill="#1e9a2a"/><rect x="14" y="12" width="1" height="1" fill="#000"/><rect x="11" y="13" width="1" height="1" fill="#000"/><rect x="12" y="13" width="1" height="1" fill="#1e9a2a"/><rect x="13" y="13" width="1" height="1" fill="#000"/><rect x="11" y="14" width="2" height="1" fill="#000"/><rect x="11" y="15" width="1" height="1" fill="#000"/></svg><div class="lbl">CNC ABC CO 3 Axis 1</div></div>
<div class="row" style="top:308px"><div class="dh"></div><svg class="ico" width="17" height="16" viewBox="0 0 17 16" shape-rendering="crispEdges" style="left:22px;top:1px;width:17px;height:16px"><rect x="8" y="1" width="8" height="1" fill="#000"/><rect x="8" y="2" width="1" height="1" fill="#000"/><rect x="9" y="2" width="5" height="1" fill="#fff"/><rect x="14" y="2" width="2" height="1" fill="#000"/><rect x="3" y="3" width="1" height="1" fill="#000"/><rect x="8" y="3" width="1" height="1" fill="#000"/><rect x="9" y="3" width="4" height="1" fill="#fff"/><rect x="13" y="3" width="1" height="1" fill="#000"/><rect x="14" y="3" width="1" height="1" fill="#1e9a2a"/><rect x="15" y="3" width="1" height="1" fill="#000"/><rect x="3" y="4" width="2" height="1" fill="#000"/><rect x="8" y="4" width="1" height="1" fill="#000"/><rect x="9" y="4" width="3" height="1" fill="#fff"/><rect x="12" y="4" width="1" height="1" fill="#000"/><rect x="13" y="4" width="2" height="1" fill="#1e9a2a"/><rect x="15" y="4" width="1" height="1" fill="#000"/><rect x="1" y="5" width="5" height="1" fill="#000"/><rect x="8" y="5" width="1" height="1" fill="#000"/><rect x="9" y="5" width="2" height="1" fill="#fff"/><rect x="11" y="5" width="1" height="1" fill="#000"/><rect x="12" y="5" width="3" height="1" fill="#1e9a2a"/><rect x="15" y="5" width="1" height="1" fill="#000"/><rect x="1" y="6" width="6" height="1" fill="#000"/><rect x="8" y="6" width="1" height="1" fill="#000"/><rect x="9" y="6" width="2" height="1" fill="#fff"/><rect x="11" y="6" width="1" height="1" fill="#000"/><rect x="12" y="6" width="3" height="1" fill="#1e9a2a"/><rect x="15" y="6" width="1" height="1" fill="#000"/><rect x="1" y="7" width="5" height="1" fill="#000"/><rect x="8" y="7" width="1" height="1" fill="#000"/><rect x="9" y="7" width="2" height="1" fill="#fff"/><rect x="11" y="7" width="1" height="1" fill="#000"/><rect x="12" y="7" width="3" height="1" fill="#1e9a2a"/><rect x="15" y="7" width="1" height="1" fill="#000"/><rect x="3" y="8" width="2" height="1" fill="#000"/><rect x="8" y="8" width="1" height="1" fill="#000"/><rect x="9" y="8" width="2" height="1" fill="#fff"/><rect x="11" y="8" width="1" height="1" fill="#000"/><rect x="12" y="8" width="3" height="1" fill="#1e9a2a"/><rect x="15" y="8" width="1" height="1" fill="#000"/><rect x="3" y="9" width="1" height="1" fill="#000"/><rect x="8" y="9" width="1" height="1" fill="#000"/><rect x="9" y="9" width="2" height="1" fill="#fff"/><rect x="11" y="9" width="1" height="1" fill="#000"/><rect x="12" y="9" width="3" height="1" fill="#1e9a2a"/><rect x="15" y="9" width="1" height="1" fill="#000"/><rect x="8" y="10" width="1" height="1" fill="#000"/><rect x="9" y="10" width="2" height="1" fill="#fff"/><rect x="11" y="10" width="1" height="1" fill="#000"/><rect x="12" y="10" width="3" height="1" fill="#1e9a2a"/><rect x="15" y="10" width="1" height="1" fill="#000"/><rect x="4" y="11" width="8" height="1" fill="#000"/><rect x="12" y="11" width="3" height="1" fill="#1e9a2a"/><rect x="15" y="11" width="2" height="1" fill="#000"/><rect x="11" y="12" width="1" height="1" fill="#000"/><rect x="12" y="12" width="2" height="1" fill="#1e9a2a"/><rect x="14" y="12" width="1" height="1" fill="#000"/><rect x="11" y="13" width="1" height="1" fill="#000"/><rect x="12" y="13" width="1" height="1" fill="#1e9a2a"/><rect x="13" y="13" width="1" height="1" fill="#000"/><rect x="11" y="14" width="2" height="1" fill="#000"/><rect x="11" y="15" width="1" height="1" fill="#000"/></svg><div class="lbl">CNC ABC CO 3 Axis 2</div></div>
<div class="row" style="top:326px"><div class="dh"></div><svg class="ico" width="17" height="16" viewBox="0 0 17 16" shape-rendering="crispEdges" style="left:22px;top:0px;width:17px;height:16px"><rect x="1" y="1" width="16" height="1" fill="#0a1490"/><rect x="1" y="2" width="8" height="1" fill="#0a1490"/><rect x="9" y="2" width="7" height="1" fill="#3a78e0"/><rect x="16" y="2" width="1" height="1" fill="#0a1490"/><rect x="1" y="3" width="16" height="1" fill="#0a1490"/><rect x="1" y="4" width="1" height="1" fill="#0a1490"/><rect x="2" y="4" width="2" height="1" fill="#e4faff"/><rect x="4" y="4" width="2" height="1" fill="#2458d8"/><rect x="6" y="4" width="1" height="1" fill="#e4faff"/><rect x="7" y="4" width="2" height="1" fill="#2458d8"/><rect x="9" y="4" width="1" height="1" fill="#e4faff"/><rect x="10" y="4" width="2" height="1" fill="#2458d8"/><rect x="12" y="4" width="1" height="1" fill="#e4faff"/><rect x="13" y="4" width="1" height="1" fill="#2458d8"/><rect x="14" y="4" width="2" height="1" fill="#e4faff"/><rect x="16" y="4" width="1" height="1" fill="#0a1490"/><rect x="1" y="5" width="1" height="1" fill="#0a1490"/><rect x="2" y="5" width="2" height="1" fill="#e4faff"/><rect x="4" y="5" width="2" height="1" fill="#2458d8"/><rect x="6" y="5" width="1" height="1" fill="#e4faff"/><rect x="7" y="5" width="2" height="1" fill="#2458d8"/><rect x="9" y="5" width="1" height="1" fill="#e4faff"/><rect x="10" y="5" width="2" height="1" fill="#2458d8"/><rect x="12" y="5" width="1" height="1" fill="#e4faff"/><rect x="13" y="5" width="1" height="1" fill="#2458d8"/><rect x="14" y="5" width="2" height="1" fill="#e4faff"/><rect x="16" y="5" width="1" height="1" fill="#0a1490"/><rect x="1" y="6" width="1" height="1" fill="#0a1490"/><rect x="2" y="6" width="14" height="1" fill="#2458d8"/><rect x="16" y="6" width="1" height="1" fill="#0a1490"/><rect x="1" y="7" width="1" height="1" fill="#0a1490"/><rect x="2" y="7" width="2" height="1" fill="#e4faff"/><rect x="4" y="7" width="1" height="1" fill="#2458d8"/><rect x="5" y="7" width="1" height="1" fill="#8a4a8a"/><rect x="6" y="7" width="1" height="1" fill="#e4faff"/><rect x="7" y="7" width="2" height="1" fill="#8a4a8a"/><rect x="9" y="7" width="1" height="1" fill="#e4faff"/><rect x="10" y="7" width="1" height="1" fill="#8a4a8a"/><rect x="11" y="7" width="1" height="1" fill="#2458d8"/><rect x="12" y="7" width="1" height="1" fill="#e4faff"/><rect x="13" y="7" width="1" height="1" fill="#2458d8"/><rect x="14" y="7" width="2" height="1" fill="#e4faff"/><rect x="16" y="7" width="1" height="1" fill="#0a1490"/><rect x="1" y="8" width="1" height="1" fill="#0a1490"/><rect x="2" y="8" width="2" height="1" fill="#e4faff"/><rect x="4" y="8" width="1" height="1" fill="#2458d8"/><rect x="5" y="8" width="1" height="1" fill="#8a4a8a"/><rect x="6" y="8" width="1" height="1" fill="#e4faff"/><rect x="7" y="8" width="2" height="1" fill="#8a4a8a"/><rect x="9" y="8" width="1" height="1" fill="#e4faff"/><rect x="10" y="8" width="1" height="1" fill="#8a4a8a"/><rect x="11" y="8" width="1" height="1" fill="#2458d8"/><rect x="12" y="8" width="1" height="1" fill="#e4faff"/><rect x="13" y="8" width="1" height="1" fill="#2458d8"/><rect x="14" y="8" width="2" height="1" fill="#e4faff"/><rect x="16" y="8" width="1" height="1" fill="#0a1490"/><rect x="1" y="9" width="1" height="1" fill="#0a1490"/><rect x="2" y="9" width="14" height="1" fill="#2458d8"/><rect x="16" y="9" width="1" height="1" fill="#0a1490"/><rect x="1" y="10" width="1" height="1" fill="#0a1490"/><rect x="2" y="10" width="2" height="1" fill="#e4faff"/><rect x="4" y="10" width="2" height="1" fill="#2458d8"/><rect x="6" y="10" width="1" height="1" fill="#e4faff"/><rect x="7" y="10" width="2" height="1" fill="#2458d8"/><rect x="9" y="10" width="1" height="1" fill="#e4faff"/><rect x="10" y="10" width="2" height="1" fill="#2458d8"/><rect x="12" y="10" width="1" height="1" fill="#e4faff"/><rect x="13" y="10" width="1" height="1" fill="#2458d8"/><rect x="14" y="10" width="2" height="1" fill="#e4faff"/><rect x="16" y="10" width="1" height="1" fill="#0a1490"/><rect x="1" y="11" width="1" height="1" fill="#0a1490"/><rect x="2" y="11" width="2" height="1" fill="#e4faff"/><rect x="4" y="11" width="2" height="1" fill="#2458d8"/><rect x="6" y="11" width="1" height="1" fill="#e4faff"/><rect x="7" y="11" width="2" height="1" fill="#2458d8"/><rect x="9" y="11" width="1" height="1" fill="#e4faff"/><rect x="10" y="11" width="2" height="1" fill="#2458d8"/><rect x="12" y="11" width="1" height="1" fill="#e4faff"/><rect x="13" y="11" width="1" height="1" fill="#2458d8"/><rect x="14" y="11" width="2" height="1" fill="#e4faff"/><rect x="16" y="11" width="1" height="1" fill="#0a1490"/><rect x="1" y="12" width="1" height="1" fill="#0a1490"/><rect x="2" y="12" width="14" height="1" fill="#2458d8"/><rect x="16" y="12" width="1" height="1" fill="#0a1490"/><rect x="1" y="13" width="1" height="1" fill="#0a1490"/><rect x="2" y="13" width="2" height="1" fill="#e4faff"/><rect x="4" y="13" width="1" height="1" fill="#2458d8"/><rect x="5" y="13" width="1" height="1" fill="#8a4a8a"/><rect x="6" y="13" width="1" height="1" fill="#e4faff"/><rect x="7" y="13" width="2" height="1" fill="#8a4a8a"/><rect x="9" y="13" width="1" height="1" fill="#e4faff"/><rect x="10" y="13" width="1" height="1" fill="#8a4a8a"/><rect x="11" y="13" width="1" height="1" fill="#2458d8"/><rect x="12" y="13" width="1" height="1" fill="#e4faff"/><rect x="13" y="13" width="1" height="1" fill="#2458d8"/><rect x="14" y="13" width="2" height="1" fill="#e4faff"/><rect x="16" y="13" width="1" height="1" fill="#0a1490"/><rect x="1" y="14" width="1" height="1" fill="#0a1490"/><rect x="2" y="14" width="2" height="1" fill="#e4faff"/><rect x="4" y="14" width="1" height="1" fill="#2458d8"/><rect x="5" y="14" width="1" height="1" fill="#8a4a8a"/><rect x="6" y="14" width="1" height="1" fill="#e4faff"/><rect x="7" y="14" width="2" height="1" fill="#8a4a8a"/><rect x="9" y="14" width="1" height="1" fill="#e4faff"/><rect x="10" y="14" width="1" height="1" fill="#8a4a8a"/><rect x="11" y="14" width="1" height="1" fill="#2458d8"/><rect x="12" y="14" width="1" height="1" fill="#e4faff"/><rect x="13" y="14" width="1" height="1" fill="#2458d8"/><rect x="14" y="14" width="2" height="1" fill="#e4faff"/><rect x="16" y="14" width="1" height="1" fill="#0a1490"/><rect x="1" y="15" width="16" height="1" fill="#0a1490"/></svg><div class="lbl">Cure</div></div>
<div class="row" style="top:344px"><div class="dh"></div><svg class="ico" width="16" height="16" viewBox="0 0 16 16" shape-rendering="crispEdges"><rect x="2" y="1" width="4" height="1" fill="#0a0806"/><rect x="1" y="2" width="7" height="1" fill="#0a0806"/><rect x="1" y="3" width="1" height="1" fill="#0a0806"/><rect x="2" y="3" width="5" height="1" fill="#f0e8cc"/><rect x="7" y="3" width="1" height="1" fill="#0a0806"/><rect x="0" y="4" width="2" height="1" fill="#0a0806"/><rect x="2" y="4" width="5" height="1" fill="#f0e8cc"/><rect x="7" y="4" width="1" height="1" fill="#0a0806"/><rect x="9" y="4" width="5" height="1" fill="#0a0806"/><rect x="0" y="5" width="2" height="1" fill="#0a0806"/><rect x="2" y="5" width="1" height="1" fill="#f0e8cc"/><rect x="3" y="5" width="1" height="1" fill="#302818"/><rect x="4" y="5" width="1" height="1" fill="#f0e8cc"/><rect x="5" y="5" width="1" height="1" fill="#302818"/><rect x="6" y="5" width="1" height="1" fill="#f0e8cc"/><rect x="7" y="5" width="2" height="1" fill="#0a0806"/><rect x="9" y="5" width="5" height="1" fill="#dcd89a"/><rect x="14" y="5" width="1" height="1" fill="#0a0806"/><rect x="0" y="6" width="2" height="1" fill="#0a0806"/><rect x="2" y="6" width="5" height="1" fill="#f0e8cc"/><rect x="7" y="6" width="2" height="1" fill="#0a0806"/><rect x="9" y="6" width="5" height="1" fill="#dcd89a"/><rect x="14" y="6" width="1" height="1" fill="#0a0806"/><rect x="0" y="7" width="2" height="1" fill="#0a0806"/><rect x="2" y="7" width="2" height="1" fill="#f0e8cc"/><rect x="4" y="7" width="1" height="1" fill="#b0a878"/><rect x="5" y="7" width="2" height="1" fill="#f0e8cc"/><rect x="7" y="7" width="2" height="1" fill="#0a0806"/><rect x="9" y="7" width="5" height="1" fill="#fbf9ee"/><rect x="14" y="7" width="1" height="1" fill="#0a0806"/><rect x="0" y="8" width="2" height="1" fill="#0a0806"/><rect x="2" y="8" width="1" height="1" fill="#f0e8cc"/><rect x="3" y="8" width="3" height="1" fill="#fbf9ee"/><rect x="6" y="8" width="1" height="1" fill="#f0e8cc"/><rect x="7" y="8" width="2" height="1" fill="#0a0806"/><rect x="9" y="8" width="1" height="1" fill="#fbf9ee"/><rect x="10" y="8" width="1" height="1" fill="#302818"/><rect x="11" y="8" width="2" height="1" fill="#fbf9ee"/><rect x="13" y="8" width="1" height="1" fill="#302818"/><rect x="14" y="8" width="1" height="1" fill="#0a0806"/><rect x="1" y="9" width="2" height="1" fill="#0a0806"/><rect x="3" y="9" width="3" height="1" fill="#fbf9ee"/><rect x="6" y="9" width="3" height="1" fill="#0a0806"/><rect x="9" y="9" width="5" height="1" fill="#fbf9ee"/><rect x="14" y="9" width="1" height="1" fill="#0a0806"/><rect x="2" y="10" width="4" height="1" fill="#0a0806"/><rect x="8" y="10" width="1" height="1" fill="#0a0806"/><rect x="9" y="10" width="1" height="1" fill="#dcd89a"/><rect x="10" y="10" width="3" height="1" fill="#fbf9ee"/><rect x="13" y="10" width="1" height="1" fill="#dcd89a"/><rect x="14" y="10" width="1" height="1" fill="#0a0806"/><rect x="9" y="11" width="1" height="1" fill="#0a0806"/><rect x="10" y="11" width="1" height="1" fill="#dcd89a"/><rect x="11" y="11" width="1" height="1" fill="#b0a878"/><rect x="12" y="11" width="1" height="1" fill="#dcd89a"/><rect x="13" y="11" width="1" height="1" fill="#0a0806"/><rect x="9" y="12" width="5" height="1" fill="#0a0806"/><rect x="10" y="13" width="3" height="1" fill="#0a0806"/></svg><div class="lbl blue">Cutting</div></div>
<div class="row" style="top:362px"><div class="dh"></div><svg class="ico" width="16" height="16" viewBox="0 0 16 16"><rect x="1" y="5.3" width="4.2" height="4.6" fill="#b83030"/><path d="M6.5 7.6 H14.5" stroke="#6a7a90" stroke-width="1"/><path d="M12 5.6 L14.6 7.6 L12 9.6" stroke="#6a7a90" stroke-width="1.1" fill="none"/></svg><div class="lbl">DMS Move</div></div>
<div class="row" style="top:380px"><div class="dh"></div><svg class="ico" width="16" height="16" viewBox="0 0 16 16"><defs><linearGradient id="ghg" x1="0" y1="0" x2="1" y2="1"><stop offset="0" stop-color="#c83838"/><stop offset="0.5" stop-color="#8ecce8"/><stop offset="1" stop-color="#e8f0c8"/></linearGradient></defs><path d="M1.5 1.2 H14.5" stroke="#d03030" stroke-width="1.6"/><path d="M2.5 2.2 L13.5 2.2 L8.7 8 L13.5 13.8 L2.5 13.8 L7.3 8 Z" fill="url(#ghg)" stroke="#1a2040" stroke-width="1.1"/><path d="M1.8 14.3 H14.2" stroke="#1a2040" stroke-width="1.2"/></svg><div class="lbl">DMS Wait</div></div>
  <div id="sb" class="a">
    <svg class="a" style="left:3px;top:7px" width="10" height="8" viewBox="0 0 10 8" shape-rendering="crispEdges"><rect x="4" y="1" width="1" height="1" fill="#606060"/><rect x="3" y="2" width="3" height="1" fill="#606060"/><rect x="2" y="3" width="5" height="1" fill="#606060"/><rect x="1" y="4" width="3" height="1" fill="#606060"/><rect x="5" y="4" width="3" height="1" fill="#606060"/><rect x="1" y="5" width="2" height="1" fill="#606060"/><rect x="6" y="5" width="2" height="1" fill="#606060"/><rect x="1" y="6" width="1" height="1" fill="#606060"/><rect x="7" y="6" width="1" height="1" fill="#606060"/></svg>
    <div id="thumb" class="a"></div>
    <svg class="a" style="left:3px;top:383px" width="10" height="8" viewBox="0 0 10 8" shape-rendering="crispEdges"><rect x="1" y="1" width="1" height="1" fill="#606060"/><rect x="7" y="1" width="1" height="1" fill="#606060"/><rect x="1" y="2" width="2" height="1" fill="#606060"/><rect x="6" y="2" width="2" height="1" fill="#606060"/><rect x="1" y="3" width="3" height="1" fill="#606060"/><rect x="5" y="3" width="3" height="1" fill="#606060"/><rect x="2" y="4" width="5" height="1" fill="#606060"/><rect x="3" y="5" width="3" height="1" fill="#606060"/><rect x="4" y="6" width="1" height="1" fill="#606060"/></svg>
  </div>
</div>

<!-- tab page -->
<div class="a" style="left:205px;top:108px;width:527px;height:380px;background:#fff;border:1px solid #d9d9d9"></div>
<div class="a" style="left:209px;top:112px;width:521px;height:373px;background:#f0f0f0"></div>
<div class="tab" style="left:270px;width:94px"></div>
<div class="tab" style="left:363px;width:86px"></div>
<div class="tab" style="left:448px;width:43px"></div>
<div class="tab" style="left:490px;width:108px"></div>
<div class="a" style="left:205px;top:88px;width:66px;height:24px;background:#fff;border:1px solid #d9d9d9;border-bottom:none"></div>
<div class="a" style="left:206px;top:108px;width:64px;height:4px;background:#fff"></div>
<div class="t" style="left:217px;top:92px;letter-spacing:-0.25px"><u>R</u>esources</div>
<div class="t" style="left:276px;top:94px;letter-spacing:-0.2px">Resource <u>P</u>rofiles</div>
<div class="t" style="left:371px;top:94px;letter-spacing:-0.2px">Resource P<u>o</u>ols</div>
<div class="t" style="left:458px;top:94px;letter-spacing:-0.2px">Poo<u>l</u>s</div>
<div class="t" style="left:498px;top:94px;letter-spacing:-0.2px"><u>S</u>ecurity Certificates</div>

<!-- form -->
<div class="t" style="left:231px;top:154px;letter-spacing:-0.15px">Resource Name:</div>
<div class="field" style="left:353px;top:150px;width:149px">Assembly</div>
<div class="t" style="left:231px;top:176px;letter-spacing:0.05px">Department:</div>
<div class="field combo" style="left:353px;top:172px;width:172px">General Assembly<svg class="a" style="left:158px;top:8px" width="9" height="6" viewBox="0 0 9 6"><path d="M0.5 0.5 L4.5 4.5 L8.5 0.5" stroke="#404040" stroke-width="1.1" fill="none"/></svg></div>
<div class="t" style="left:231px;top:198px;letter-spacing:0.05px">Type of Resource:</div>
<div class="field combo" style="left:353px;top:194px;width:172px">Labor<svg class="a" style="left:158px;top:8px" width="9" height="6" viewBox="0 0 9 6"><path d="M0.5 0.5 L4.5 4.5 L8.5 0.5" stroke="#404040" stroke-width="1.1" fill="none"/></svg></div>
<div class="t" style="left:231px;top:220px;letter-spacing:0.05px">Hours/Shift:</div>
<div class="field num" style="left:353px;top:216px;width:74px">32.00</div>
<div class="t" style="left:231px;top:242px;letter-spacing:0.05px">Hours/Operation:</div>
<div class="field num" style="left:353px;top:238px;width:74px">8.00</div>
<div class="t" style="left:231px;top:264px;letter-spacing:0.05px">Efficiency Factor:</div>
<div class="field num" style="left:353px;top:260px;width:74px">100</div>
<div class="t" style="left:231px;top:286px;letter-spacing:0.05px">Standard Cost/Hr:</div>
<div class="field num" style="left:353px;top:282px;width:74px">$75.50</div>
<div class="t" style="left:231px;top:308px;letter-spacing:0.05px">Overtime Cost/Hr:</div>
<div class="field num" style="left:353px;top:304px;width:74px">$100.00</div>
<div class="t" style="left:231px;top:327px;letter-spacing:0.05px">Section:</div>
<div class="field" style="left:353px;top:326px;width:280px">ABC-32</div>
<div class="t" style="left:231px;top:349px;letter-spacing:0.05px">Manager:</div>
<div class="field" style="left:353px;top:348px;width:280px">Gene Wilder</div>
<div class="t" style="left:231px;top:371px;letter-spacing:0.05px">Coded:</div>
<div class="field" style="left:353px;top:370px;width:280px">Yes</div>
<div class="t" style="left:231px;top:393px;letter-spacing:0.05px">Notes:</div>
<div class="field" style="left:353px;top:392px;width:326px;height:76px"></div>
<div class="t" style="left:593px;top:155px">Available:</div>
<div class="a" style="left:648px;top:154px;width:13px;height:13px;background:#fff;border:1px solid #333"></div>
<svg class="a" style="left:648px;top:154px" width="13" height="13" viewBox="0 0 13 13"><path d="M2.5 6.5 L5 9 L10.5 3.5" stroke="#333" stroke-width="1.2" fill="none"/></svg>

<!-- buttons -->

<div class="btn" style="left:379px;top:499px;border:2px solid #1a64b0"></div>
<div class="a" style="left:381px;top:501px;width:106px;height:19px;border:1px dotted #000"></div>
<svg class="a" style="left:413px;top:504px" width="14" height="14" viewBox="0 0 14 14" shape-rendering="crispEdges"><rect x="0" y="0" width="14" height="1" fill="#000"/><rect x="0" y="1" width="1" height="1" fill="#000"/><rect x="1" y="1" width="1" height="1" fill="#8e8e30"/><rect x="2" y="1" width="1" height="1" fill="#000"/><rect x="3" y="1" width="8" height="1" fill="#f4f4f4"/><rect x="11" y="1" width="1" height="1" fill="#000"/><rect x="12" y="1" width="1" height="1" fill="#8e8e30"/><rect x="13" y="1" width="1" height="1" fill="#000"/><rect x="0" y="2" width="1" height="1" fill="#000"/><rect x="1" y="2" width="1" height="1" fill="#8e8e30"/><rect x="2" y="2" width="1" height="1" fill="#000"/><rect x="3" y="2" width="8" height="1" fill="#f4f4f4"/><rect x="11" y="2" width="3" height="1" fill="#000"/><rect x="0" y="3" width="1" height="1" fill="#000"/><rect x="1" y="3" width="1" height="1" fill="#8e8e30"/><rect x="2" y="3" width="1" height="1" fill="#000"/><rect x="3" y="3" width="8" height="1" fill="#f4f4f4"/><rect x="11" y="3" width="1" height="1" fill="#000"/><rect x="12" y="3" width="1" height="1" fill="#8e8e30"/><rect x="13" y="3" width="1" height="1" fill="#000"/><rect x="0" y="4" width="1" height="1" fill="#000"/><rect x="1" y="4" width="1" height="1" fill="#8e8e30"/><rect x="2" y="4" width="1" height="1" fill="#000"/><rect x="3" y="4" width="8" height="1" fill="#f4f4f4"/><rect x="11" y="4" width="1" height="1" fill="#000"/><rect x="12" y="4" width="1" height="1" fill="#8e8e30"/><rect x="13" y="4" width="1" height="1" fill="#000"/><rect x="0" y="5" width="1" height="1" fill="#000"/><rect x="1" y="5" width="1" height="1" fill="#8e8e30"/><rect x="2" y="5" width="1" height="1" fill="#000"/><rect x="3" y="5" width="8" height="1" fill="#f4f4f4"/><rect x="11" y="5" width="1" height="1" fill="#000"/><rect x="12" y="5" width="1" height="1" fill="#8e8e30"/><rect x="13" y="5" width="1" height="1" fill="#000"/><rect x="0" y="6" width="1" height="1" fill="#000"/><rect x="1" y="6" width="1" height="1" fill="#8e8e30"/><rect x="2" y="6" width="10" height="1" fill="#000"/><rect x="12" y="6" width="1" height="1" fill="#8e8e30"/><rect x="13" y="6" width="1" height="1" fill="#000"/><rect x="0" y="7" width="1" height="1" fill="#000"/><rect x="1" y="7" width="12" height="1" fill="#8e8e30"/><rect x="13" y="7" width="1" height="1" fill="#000"/><rect x="0" y="8" width="1" height="1" fill="#000"/><rect x="1" y="8" width="2" height="1" fill="#8e8e30"/><rect x="3" y="8" width="8" height="1" fill="#000"/><rect x="11" y="8" width="2" height="1" fill="#8e8e30"/><rect x="13" y="8" width="1" height="1" fill="#000"/><rect x="0" y="9" width="1" height="1" fill="#000"/><rect x="1" y="9" width="2" height="1" fill="#8e8e30"/><rect x="3" y="9" width="5" height="1" fill="#000"/><rect x="8" y="9" width="2" height="1" fill="#f4f4f4"/><rect x="10" y="9" width="1" height="1" fill="#000"/><rect x="11" y="9" width="2" height="1" fill="#8e8e30"/><rect x="13" y="9" width="1" height="1" fill="#000"/><rect x="0" y="10" width="1" height="1" fill="#000"/><rect x="1" y="10" width="2" height="1" fill="#8e8e30"/><rect x="3" y="10" width="5" height="1" fill="#000"/><rect x="8" y="10" width="2" height="1" fill="#f4f4f4"/><rect x="10" y="10" width="1" height="1" fill="#000"/><rect x="11" y="10" width="2" height="1" fill="#8e8e30"/><rect x="13" y="10" width="1" height="1" fill="#000"/><rect x="0" y="11" width="1" height="1" fill="#000"/><rect x="1" y="11" width="2" height="1" fill="#8e8e30"/><rect x="3" y="11" width="5" height="1" fill="#000"/><rect x="8" y="11" width="2" height="1" fill="#f4f4f4"/><rect x="10" y="11" width="1" height="1" fill="#000"/><rect x="11" y="11" width="2" height="1" fill="#8e8e30"/><rect x="13" y="11" width="1" height="1" fill="#000"/><rect x="0" y="12" width="1" height="1" fill="#000"/><rect x="1" y="12" width="2" height="1" fill="#8e8e30"/><rect x="3" y="12" width="8" height="1" fill="#000"/><rect x="11" y="12" width="2" height="1" fill="#8e8e30"/><rect x="13" y="12" width="1" height="1" fill="#000"/><rect x="0" y="13" width="14" height="1" fill="#000"/></svg>
<div class="t" style="left:431px;top:505px"><u>S</u>ave</div>
<div class="btn" style="left:499px;top:498px"></div>
<svg class="a" style="left:529px;top:502px" width="16" height="16" viewBox="0 0 16 16"><path d="M2.5 2.5 L13.5 14 M13.5 2.5 L2.5 14" stroke="#a81010" stroke-width="3.2" stroke-linecap="round"/></svg>
<div class="t" style="left:549px;top:504px"><u>C</u>ancel</div>
<div class="btn" style="left:617px;top:499px"></div>
<svg class="a" style="left:653px;top:503px" width="17" height="16" viewBox="0 0 17 16" shape-rendering="crispEdges"><rect x="1" y="1" width="8" height="1" fill="#000"/><rect x="1" y="2" width="2" height="1" fill="#000"/><rect x="3" y="2" width="5" height="1" fill="#fff"/><rect x="8" y="2" width="1" height="1" fill="#000"/><rect x="1" y="3" width="1" height="1" fill="#000"/><rect x="2" y="3" width="1" height="1" fill="#a4a070"/><rect x="3" y="3" width="1" height="1" fill="#000"/><rect x="4" y="3" width="4" height="1" fill="#fff"/><rect x="8" y="3" width="1" height="1" fill="#000"/><rect x="14" y="3" width="1" height="1" fill="#1c1c8a"/><rect x="1" y="4" width="1" height="1" fill="#000"/><rect x="2" y="4" width="2" height="1" fill="#a4a070"/><rect x="4" y="4" width="1" height="1" fill="#000"/><rect x="5" y="4" width="3" height="1" fill="#fff"/><rect x="8" y="4" width="1" height="1" fill="#000"/><rect x="13" y="4" width="2" height="1" fill="#1c1c8a"/><rect x="1" y="5" width="1" height="1" fill="#000"/><rect x="2" y="5" width="3" height="1" fill="#a4a070"/><rect x="5" y="5" width="1" height="1" fill="#000"/><rect x="6" y="5" width="2" height="1" fill="#fff"/><rect x="8" y="5" width="1" height="1" fill="#000"/><rect x="12" y="5" width="5" height="1" fill="#1c1c8a"/><rect x="1" y="6" width="1" height="1" fill="#000"/><rect x="2" y="6" width="3" height="1" fill="#a4a070"/><rect x="5" y="6" width="1" height="1" fill="#000"/><rect x="6" y="6" width="2" height="1" fill="#fff"/><rect x="8" y="6" width="1" height="1" fill="#000"/><rect x="10" y="6" width="7" height="1" fill="#1c1c8a"/><rect x="1" y="7" width="1" height="1" fill="#000"/><rect x="2" y="7" width="3" height="1" fill="#a4a070"/><rect x="5" y="7" width="1" height="1" fill="#000"/><rect x="6" y="7" width="2" height="1" fill="#fff"/><rect x="8" y="7" width="1" height="1" fill="#000"/><rect x="10" y="7" width="7" height="1" fill="#1c1c8a"/><rect x="1" y="8" width="1" height="1" fill="#000"/><rect x="2" y="8" width="3" height="1" fill="#a4a070"/><rect x="5" y="8" width="1" height="1" fill="#000"/><rect x="6" y="8" width="2" height="1" fill="#fff"/><rect x="8" y="8" width="1" height="1" fill="#000"/><rect x="12" y="8" width="5" height="1" fill="#1c1c8a"/><rect x="1" y="9" width="1" height="1" fill="#000"/><rect x="2" y="9" width="3" height="1" fill="#a4a070"/><rect x="5" y="9" width="1" height="1" fill="#000"/><rect x="6" y="9" width="2" height="1" fill="#fff"/><rect x="8" y="9" width="1" height="1" fill="#000"/><rect x="13" y="9" width="2" height="1" fill="#1c1c8a"/><rect x="1" y="10" width="1" height="1" fill="#000"/><rect x="2" y="10" width="3" height="1" fill="#a4a070"/><rect x="5" y="10" width="1" height="1" fill="#000"/><rect x="6" y="10" width="2" height="1" fill="#fff"/><rect x="8" y="10" width="1" height="1" fill="#000"/><rect x="14" y="10" width="1" height="1" fill="#1c1c8a"/><rect x="0" y="11" width="2" height="1" fill="#000"/><rect x="2" y="11" width="3" height="1" fill="#a4a070"/><rect x="5" y="11" width="8" height="1" fill="#000"/><rect x="2" y="12" width="1" height="1" fill="#000"/><rect x="3" y="12" width="2" height="1" fill="#a4a070"/><rect x="5" y="12" width="1" height="1" fill="#000"/><rect x="3" y="13" width="1" height="1" fill="#000"/><rect x="4" y="13" width="1" height="1" fill="#a4a070"/><rect x="5" y="13" width="1" height="1" fill="#000"/><rect x="4" y="14" width="2" height="1" fill="#000"/><rect x="5" y="15" width="1" height="1" fill="#000"/></svg>
<div class="t" style="left:673px;top:505px"><u>E</u>xit</div>


<!-- status bar -->
<div class="a" style="left:1px;top:530px;width:733px;height:1px;background:#d7d7d7"></div>
<div class="t" style="left:7px;top:535px;letter-spacing:0.15px">Dataset name:  DMSSim</div>
<div class="a" style="left:250px;top:531px;width:1px;height:18px;background:#d2d2d2"></div>
<svg class="a" style="left:721px;top:538px" width="12" height="12" viewBox="0 0 12 12"><g fill="#b8b8b8"><rect x="9" y="1" width="2" height="2"/><rect x="6" y="4" width="2" height="2"/><rect x="9" y="4" width="2" height="2"/><rect x="3" y="7" width="2" height="2"/><rect x="6" y="7" width="2" height="2"/><rect x="9" y="7" width="2" height="2"/></g></svg>
</body></html>
